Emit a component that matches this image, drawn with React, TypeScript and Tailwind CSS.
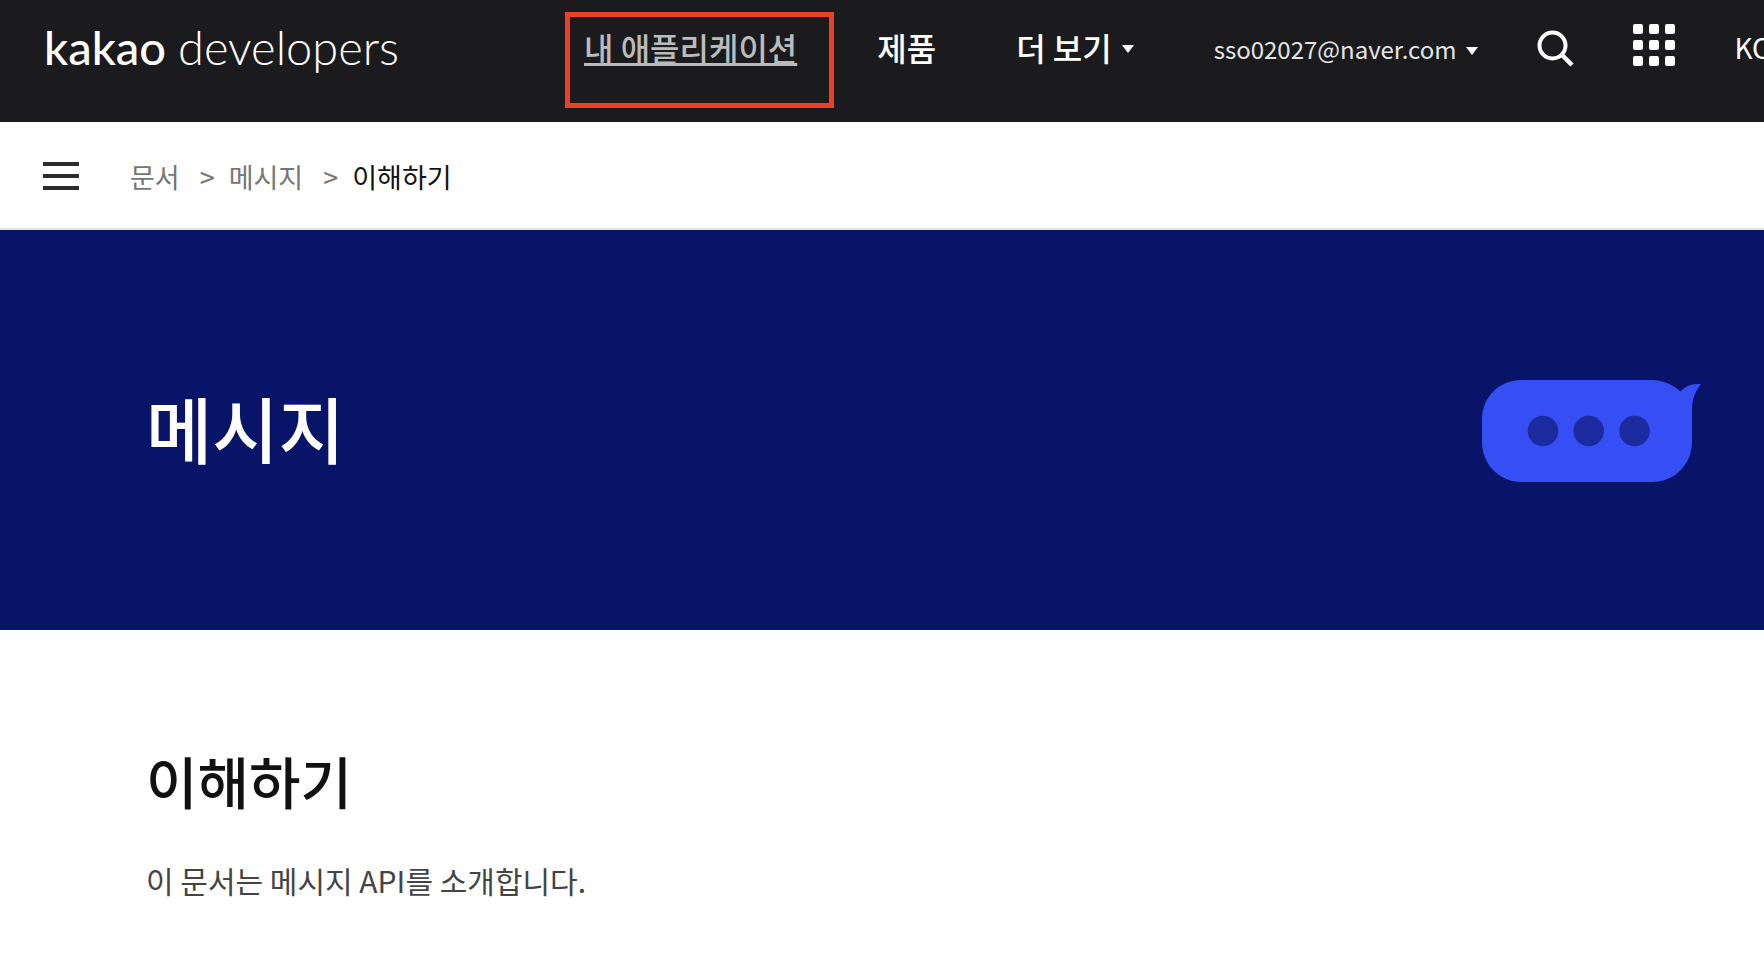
import React, { useState } from 'react';

type Crumb = {
  label: string;
  current?: boolean;
};

const crumbs: Crumb[] = [
  { label: '문서' },
  { label: '메시지' },
  { label: '이해하기', current: true }
];

function Caret() {
  return (
    <svg className="mt-1" width="12" height="8" viewBox="0 0 12 8" fill="currentColor" aria-hidden="true">
      <path d="M0 0h12L6 8z" />
    </svg>
  );
}

function SearchIcon() {
  return (
    <svg width="37" height="38" viewBox="0 0 37 38" fill="none" stroke="currentColor" strokeWidth="4" aria-hidden="true">
      <circle cx="15.5" cy="15.5" r="13" />
      <path d="M24.5 24.5L35 35" strokeWidth="4.5" />
    </svg>
  );
}

function AppsIcon() {
  return (
    <svg width="42" height="42" viewBox="0 0 42 42" fill="currentColor" aria-hidden="true">
      {[0, 16, 32].map(y =>
        [0, 16, 32].map(x => <rect key={`${x}-${y}`} x={x} y={y} width="10" height="10" rx="2" />)
      )}
    </svg>
  );
}

function BubbleArt() {
  return (
    <svg className="mt-1 shrink-0" width="220" height="104" viewBox="0 0 220 104" aria-hidden="true">
      <path
        fill="#364ff5"
        d="M40 0H170C180 0 190 4 198.500 11.500C203 6.500 209 3.300 219 4C213.500 11 210 19 210 30V62C210 84 193 102 170 102H40C17 102 0 84 0 62V40C0 17 17 0 40 0Z"
      />
      <g fill="#1b2b9f">
        <circle cx="61" cy="51" r="15.300" />
        <circle cx="106.700" cy="51" r="15.300" />
        <circle cx="152.500" cy="51" r="15.300" />
      </g>
    </svg>
  );
}

function Header() {
  return (
    <header className="flex h-[122px] items-start bg-[#1b1b1d] text-white">
      <div className="flex h-[94px] w-full shrink-0 items-center pl-11">
        <a href="#" className="w-[540px] shrink-0 font-['Lato',sans-serif] text-[47px] leading-none whitespace-nowrap">
          <span className="font-medium">kakao</span> <span className="font-light">developers</span>
        </a>

        <nav className="flex shrink-0 items-center gap-20 text-[32px] font-medium whitespace-nowrap">
          <a href="#" className="relative text-[#bbbbbb] underline decoration-[3px] underline-offset-2">
            내 애플리케이션
            <span className="absolute -top-[11px] -right-[37px] -bottom-[37px] -left-[19px] border-5 border-[#ea4025]" />
          </a>
          <a href="#">제품</a>
          <button type="button" className="flex items-center gap-2.5">
            더 보기
            <Caret />
          </button>
        </nav>

        <div className="ml-20 flex shrink-0 items-center gap-[59px] whitespace-nowrap">
          <button type="button" className="flex items-center gap-2.5 pt-1 text-[24px]">
            <span className="text-[#e5e5e5]">sso02027@naver.com</span>
            <Caret />
          </button>
          <button type="button" aria-label="검색" className="mt-1">
            <SearchIcon />
          </button>
          <button type="button" aria-label="서비스" className="mb-1">
            <AppsIcon />
          </button>
          <button type="button" className="text-[28px]">KO</button>
        </div>
      </div>
    </header>
  );
}

function Breadcrumb({ onToggle }: { onToggle: () => void }) {
  return (
    <div className="flex h-[108px] items-center border-b-2 border-[#e5e5e5] pt-1 pl-[43px]">
      <button type="button" aria-label="메뉴" onClick={onToggle} className="mb-0.5 flex w-9 flex-col gap-2">
        <span className="h-1 bg-[#2b2b2b]" />
        <span className="h-1 bg-[#2b2b2b]" />
        <span className="h-1 bg-[#2b2b2b]" />
      </button>
      <ol className="ml-[51px] flex items-center text-[27px]">
        {crumbs.map((crumb, i) => (
          <li key={crumb.label} className="flex items-center text-[#757575]">
            {i > 0 && <span className="mr-3.5 ml-5">&gt;</span>}
            <a href="#" className={crumb.current ? 'text-[#111111]' : ''}>{crumb.label}</a>
          </li>
        ))}
      </ol>
    </div>
  );
}

function App() {
  const [menuOpen, setMenuOpen] = useState<boolean>(false);

  return (
    <div className="min-h-screen overflow-x-hidden bg-white font-['Noto_Sans_CJK_KR',sans-serif]">
      <Header />
      <Breadcrumb onToggle={() => setMenuOpen(!menuOpen)} />

      <section className="flex h-[400px] items-center justify-between bg-[#071467] pr-[62px] pl-[146px]">
        <h1 className="pb-1.5 text-[72px] leading-none font-medium text-white">메시지</h1>
        <BubbleArt />
      </section>

      <main className="px-[146px] pt-[110px]">
        <h2 className="text-[56px] leading-20 font-medium text-[#111111]">이해하기</h2>
        <p className="mt-9 text-[30px] leading-12 text-[#444444]">이 문서는 메시지 API를 소개합니다.</p>
      </main>
    </div>
  );
}

export default App;
